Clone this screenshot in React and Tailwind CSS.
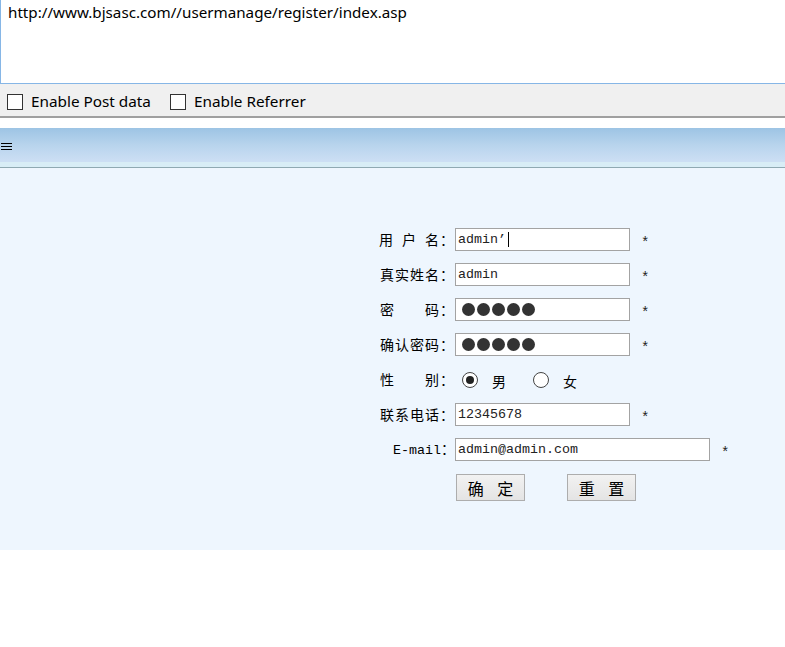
import React from "react";

const cjk = { fontFamily: '"Noto Sans CJK SC", "Noto Sans", sans-serif' };
const ui = { fontFamily: '"Noto Sans", "Open Sans", sans-serif' };
const mono = { fontFamily: '"Liberation Mono", "Noto Sans CJK SC", monospace' };

const Star = () => (
  <span className="text-[14px] text-[#222] ml-[11px] mt-[7px]" style={mono}>
    *
  </span>
);

const Dots = () => (
  <div className="flex items-center gap-[2px] pl-[4px]">
    {[0, 1, 2, 3, 4].map((i) => (
      <span key={i} className="w-[13px] h-[13px] rounded-full bg-[#333]" />
    ))}
  </div>
);

const Field = ({ label, children, star = true }) => (
  <div className="flex items-center h-[35px]">
    <div className="w-[80px] text-right text-[14px] text-black whitespace-pre tracking-[1px]" style={cjk}>
      {label}
    </div>
    <div
      className="w-[175px] h-[23px] bg-white border border-[#a3a3a3] flex items-center px-[2px] text-[13.33px] text-[#222]"
      style={mono}
    >
      {children}
    </div>
    {star && <Star />}
  </div>
);

const Radio = ({ checked }) => (
  <span className="w-[16px] h-[16px] rounded-full border border-[#444] bg-white flex items-center justify-center">
    {checked && <span className="w-[8px] h-[8px] rounded-full bg-[#222]" />}
  </span>
);

const Checkbox = () => (
  <span className="w-[16px] h-[16px] border border-[#333] bg-white inline-block" />
);

export default function App() {
  return (
    <div className="w-[785px] h-[647px] bg-white overflow-hidden">
      {/* url box */}
      <div className="h-[84px] border-l border-b border-[#86b6e6] px-[7px] pt-[1px] text-[15.2px] text-black" style={ui}>
        http://www.bjsasc.com//usermanage/register/index.asp
      </div>

      {/* options */}
      <div className="h-[32px] bg-[#f0f0f0] flex items-center px-[7px] pt-[3px] text-[15.3px] text-black" style={ui}>
        <label className="flex items-center gap-[8px]">
          <Checkbox />
          Enable Post data
        </label>
        <label className="flex items-center gap-[8px] ml-[19px]">
          <Checkbox />
          Enable Referrer
        </label>
      </div>
      <div className="h-[2px] bg-[#a0a0a0]" />
      <div className="h-[10px]" />

      {/* header bar */}
      <div className="h-[34px] bg-linear-to-b from-[#9dc4e4] via-[#b8d4ed] to-[#cddff4] flex items-center pl-[1px] pt-[3px]">
        <div className="flex flex-col gap-[2px] w-[11px]">
          <span className="h-[1px] bg-black" />
          <span className="h-[1px] bg-black" />
          <span className="h-[1px] bg-black" />
        </div>
      </div>
      <div className="h-[5px] bg-[#d8edf6]" />
      <div className="h-[1px] bg-[#8fa9b2]" />

      {/* form */}
      <div className="h-[382px] bg-[#eef6fe] pt-[54px] pl-[375px]">
        <Field label={"用\u2002户\u2002名："}>
          admin’<span className="ml-[2px] w-[1px] h-[15px] bg-black inline-block" />
        </Field>
        <Field label="真实姓名：">admin</Field>
        <Field label="密　　码：">
          <Dots />
        </Field>
        <Field label="确认密码：">
          <Dots />
        </Field>
        <div className="flex items-center h-[35px] text-[14px] text-black" style={cjk}>
          <div className="w-[80px] text-right whitespace-pre tracking-[1px]">性　　别：</div>
          <div className="flex items-center pl-[7px] pt-[1px]">
            <Radio checked />
            <span className="ml-[14px] mt-[3px]">男</span>
            <span className="ml-[27px]">
              <Radio />
            </span>
            <span className="ml-[14px] mt-[3px]">女</span>
          </div>
        </div>
        <Field label="联系电话：">12345678</Field>
        <div className="flex items-center h-[35px]">
          <div className="w-[80px] text-right text-[13.33px] text-black" style={mono}>
            E-mail<span className="text-[14px]" style={cjk}>：</span>
          </div>
          <div
            className="w-[255px] h-[23px] bg-white border border-[#a3a3a3] flex items-center px-[2px] text-[13.33px] text-[#222]"
            style={mono}
          >
            admin@admin.com
          </div>
          <Star />
        </div>
        <div className="flex items-center pl-[81px] pt-[7px] gap-[42px] text-[16px] text-black" style={cjk}>
          <button className="w-[69px] h-[27px] bg-linear-to-b from-[#f2f2f2] to-[#e4e4e4] border border-[#adadad] tracking-[5px] pl-[5px]">
            确 定
          </button>
          <button className="w-[69px] h-[27px] bg-linear-to-b from-[#f2f2f2] to-[#e4e4e4] border border-[#adadad] tracking-[5px] pl-[5px]">
            重 置
          </button>
        </div>
      </div>
    </div>
  );
}
